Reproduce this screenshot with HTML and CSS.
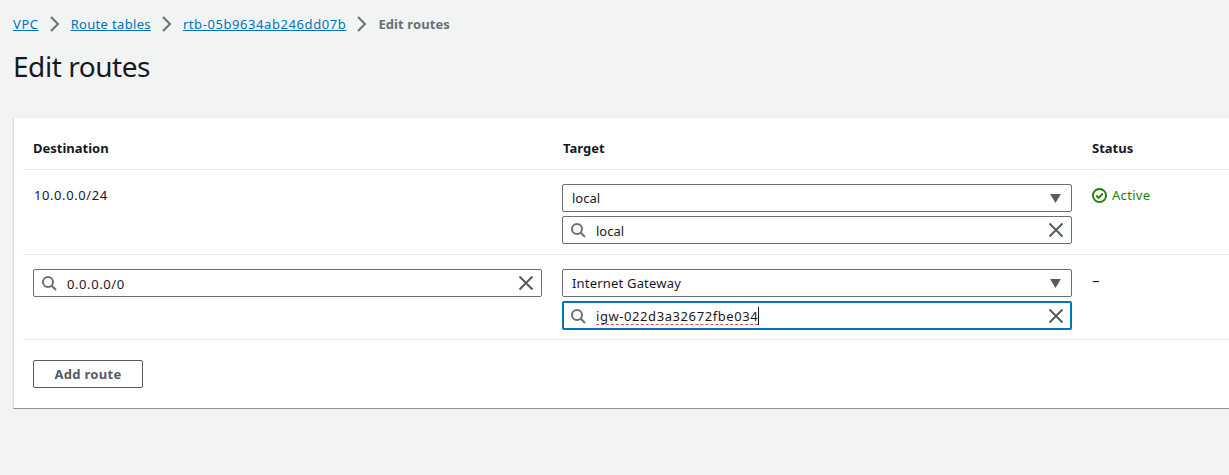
FILE: index.html
```html
<!DOCTYPE html>
<html lang="en">
  <head>
    <meta charset="UTF-8" />
    <title>Edit routes</title>
    <link rel="stylesheet" href="styles.css">
  </head>
  <body>
    <nav class="breadcrumbs">
      <a href="#" class="digits">VPC</a>
      <svg class="crumb-arrow" viewBox="0 0 16 16"><path d="M4 1l7 7-7 7" /></svg>
      <a href="#" class="words">Route tables</a>
      <svg class="crumb-arrow" viewBox="0 0 16 16"><path d="M4 1l7 7-7 7" /></svg>
      <a href="#" class="digits">rtb-05b9634ab246dd07b</a>
      <svg class="crumb-arrow" viewBox="0 0 16 16"><path d="M4 1l7 7-7 7" /></svg>
      <span class="crumb-current">Edit routes</span>
    </nav>

    <h1>Edit routes</h1>

    <div class="card">
      <div class="row head">
        <div>Destination</div>
        <div class="target-head">Target</div>
        <div>Status</div>
      </div>

      <div class="row">
        <div class="plain cidr digits">10.0.0.0/24</div>
        <div class="stack">
          <div class="field select">
            <span class="value">local</span>
            <svg class="caret" viewBox="0 0 12 10"><path d="M0 0h12L6 10z" /></svg>
          </div>
          <div class="field search">
            <svg class="icon" viewBox="0 0 16 16"><circle cx="7" cy="7" r="5" /><path d="M10.5 10.5L15 15" /></svg>
            <span class="value">local</span>
            <svg class="clear" viewBox="0 0 16 16"><path d="M1.5 1.5l13 13M14.5 1.5l-13 13" /></svg>
          </div>
        </div>
        <div class="status-active">
          <svg viewBox="0 0 16 16"><circle cx="8" cy="8" r="7" /><path d="M4.5 8l2.5 2.5 4.5-4.5" /></svg>
          <span class="active-label">Active</span>
        </div>
      </div>

      <div class="row">
        <div>
          <div class="field search">
            <svg class="icon" viewBox="0 0 16 16"><circle cx="7" cy="7" r="5" /><path d="M10.5 10.5L15 15" /></svg>
            <span class="value digits">0.0.0.0/0</span>
            <svg class="clear" viewBox="0 0 16 16"><path d="M1.5 1.5l13 13M14.5 1.5l-13 13" /></svg>
          </div>
        </div>
        <div class="stack">
          <div class="field select">
            <span class="value words-tight">Internet Gateway</span>
            <svg class="caret" viewBox="0 0 12 10"><path d="M0 0h12L6 10z" /></svg>
          </div>
          <div class="field focused">
            <svg class="icon" viewBox="0 0 16 16"><circle cx="7" cy="7" r="5" /><path d="M10.5 10.5L15 15" /></svg>
            <span class="value typed digits">igw-022d3a32672fbe034</span>
            <svg class="clear" viewBox="0 0 16 16"><path d="M1.5 1.5l13 13M14.5 1.5l-13 13" /></svg>
          </div>
        </div>
        <div class="plain dash">–</div>
      </div>

      <div class="actions">
        <button>Add route</button>
      </div>
    </div>
  </body>
</html>
```

FILE: styles.css
```css
body {
  font-family: "Noto Sans", "Open Sans", sans-serif;
  font-size: 13px;
  line-height: 20px;
  background-color: #f2f3f3;
  color: #16191f;
  margin: 0;
  padding: 14px 0 0 13px;
  overflow: hidden;
}

.digits {
  letter-spacing: 0.58px;
}

.words {
  letter-spacing: 0.33px;
}

.words-tight {
  letter-spacing: 0.19px;
}

.breadcrumbs {
  display: flex;
  align-items: center;
  height: 20px;
}

.breadcrumbs a {
  color: #0073bb;
}

.crumb-arrow {
  width: 16px;
  height: 16px;
  margin: 0 8px;
  fill: none;
  stroke: #687078;
  stroke-width: 2;
}

.crumb-current {
  color: #687078;
  font-weight: 700;
  letter-spacing: 0.1px;
}

h1 {
  font-size: 28px;
  line-height: 36px;
  font-weight: 400;
  letter-spacing: -0.45px;
  margin: 14px 0 33px;
}

.card {
  background-color: #fff;
  border-top: 1px solid #eaeded;
  border-left: 1px solid #d5dbdb;
  border-bottom: 1px solid #879596;
  box-shadow: 0 1px 1px rgba(0, 31, 63, 0.15);
  padding: 0 0 19px 9px;
  height: 271px;
}

.row {
  display: grid;
  grid-template-columns: 529px 530px 1fr;
  padding: 14px 0 10px 10px;
  height: 60px;
  border-bottom: 1px solid #eaeded;
}

.row.head {
  height: 26px;
  padding: 20px 0 5px 10px;
  font-weight: 700;
}

.row > div:first-child {
  width: 509px;
}

.row > div:nth-child(2) {
  width: 510px;
}

.target-head {
  padding-left: 1px;
}

.plain {
  padding-top: 1px;
}

.cidr {
  padding-left: 1px;
}

.dash {
  font-size: 15px;
}

.stack {
  display: flex;
  flex-direction: column;
  gap: 4px;
}

.field {
  display: flex;
  align-items: center;
  height: 28px;
  box-sizing: border-box;
  background-color: #fff;
  border: 1px solid #687078;
  border-radius: 2px;
  padding: 0 8px 0 9px;
}

.field.focused {
  border: 2px solid #0073bb;
  padding: 0 7px 0 8px;
  height: 29px;
}

.value {
  flex: 1;
}

.search .value {
  padding-top: 2px;
}

.icon {
  width: 16px;
  height: 16px;
  margin: 0 10px 0 -2px;
  fill: none;
  stroke: #687078;
  stroke-width: 2;
}

.clear {
  width: 16px;
  height: 16px;
  margin-right: -1px;
  fill: none;
  stroke: #545b64;
  stroke-width: 2;
}

.caret {
  width: 11px;
  height: 9px;
  margin-right: 2px;
  fill: #545b64;
}

.typed {
  flex: none;
  text-decoration: underline dashed #e8484c 1px;
  text-decoration-skip-ink: none;
  text-underline-offset: 3px;
  border-right: 1px solid #16191f;
  line-height: 18px;
  margin-right: auto;
}

.status-active {
  color: #1d8102;
  display: flex;
  align-items: center;
  gap: 5px;
  height: 22px;
}

.active-label {
  letter-spacing: 0.3px;
}

.status-active svg {
  width: 15px;
  height: 15px;
  fill: none;
  stroke: #1d8102;
  stroke-width: 2;
}

.actions {
  padding: 20px 0 0 10px;
}

button {
  font: inherit;
  font-weight: 700;
  letter-spacing: 0.3px;
  color: #545b64;
  background-color: #fff;
  width: 110px;
  height: 28px;
  padding: 0;
  border: 1px solid #545b64;
  border-radius: 2px;
}
```
